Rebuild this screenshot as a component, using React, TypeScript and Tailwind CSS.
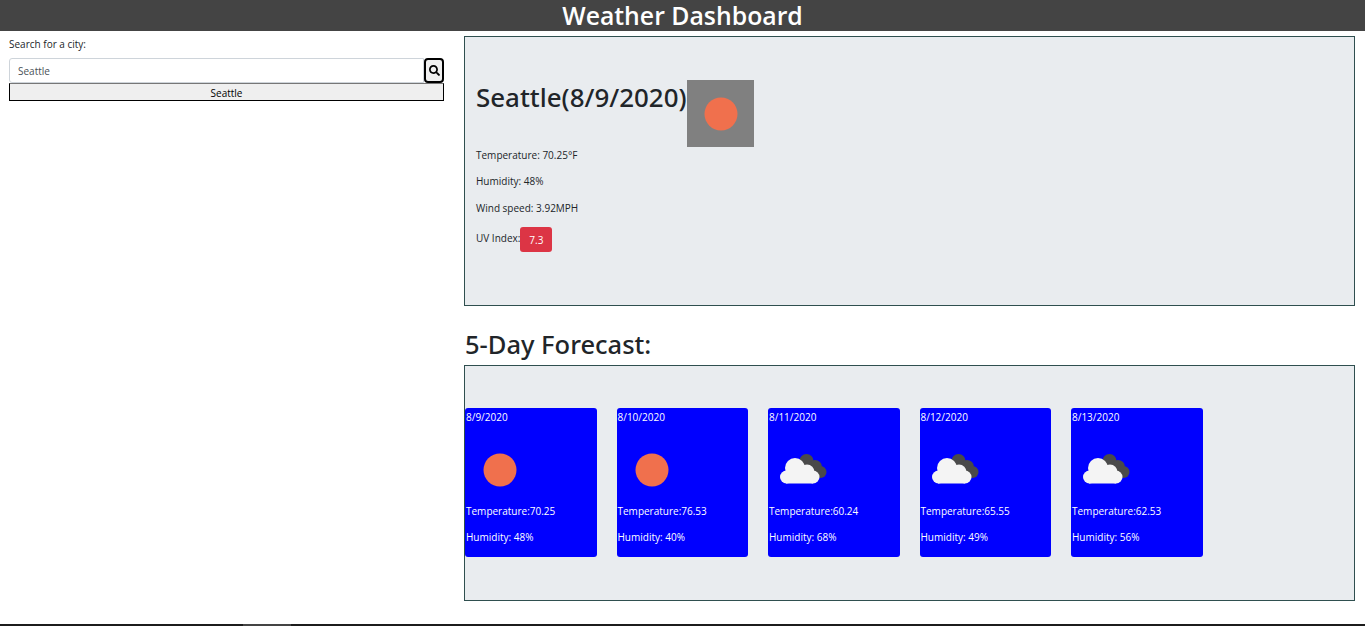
import { FaSearch } from 'react-icons/fa';

const FONT = "font-['Open_Sans','Noto_Sans',sans-serif]";

const forecast = [
    { date: '8/9/2020', temp: '70.25', humidity: '48%', icon: 'sun' },
    { date: '8/10/2020', temp: '76.53', humidity: '40%', icon: 'sun' },
    { date: '8/11/2020', temp: '60.24', humidity: '68%', icon: 'clouds' },
    { date: '8/12/2020', temp: '65.55', humidity: '49%', icon: 'clouds' },
    { date: '8/13/2020', temp: '62.53', humidity: '56%', icon: 'clouds' },
];

const SunIcon = () => (
    <svg width="67" height="67" viewBox="0 0 67 67" className="block">
        <circle cx="34" cy="34" r="16.5" fill="#f0704d" />
    </svg>
);

const CloudsIcon = () => (
    <svg width="67" height="67" viewBox="0 0 67 67" className="block">
        <g fill="#4a4a4a">
            <circle cx="37.5" cy="25" r="7" />
            <circle cx="46" cy="31" r="7" />
            <circle cx="51.5" cy="36" r="6" />
            <rect x="38" y="28" width="14" height="13" />
        </g>
        <g fill="#f4f4f4">
            <circle cx="17.5" cy="41" r="6.5" />
            <circle cx="26" cy="32" r="10" />
            <circle cx="38" cy="36" r="7.5" />
            <circle cx="44" cy="41" r="6.5" />
            <rect x="17" y="35" width="27" height="12.5" />
        </g>
    </svg>
);

export default function App() {
    return (
        <div className={`${FONT} h-[626px] flex flex-col bg-white text-[#212529] overflow-hidden`}>
            {/* Header */}
            <header className="h-[31px] shrink-0 bg-[#444444] flex items-center justify-center">
                <h1 className="text-[24.8px] leading-[31px] font-semibold text-white">Weather Dashboard</h1>
            </header>

            <div className="flex-1 flex gap-[20px] pl-[9px] pr-[10px]">
                {/* Search */}
                <aside className="w-[435px] shrink-0 pt-[5px]">
                    <label className="block text-[10px] leading-[16px]">Search for a city:</label>
                    <div className="flex mt-[6px] h-[25px]">
                        <input
                            readOnly
                            value="Seattle"
                            className="flex-1 min-w-0 h-full px-[8px] text-[10px] text-[#495057] bg-white border border-[#ced4da] rounded-l-[3px] outline-none"
                        />
                        <button className="w-[20px] h-full flex items-center justify-center border-2 border-black rounded-[4px] bg-[#efefef]">
                            <FaSearch size={11} className="text-black" />
                        </button>
                    </div>
                    <button className="w-full h-[18px] flex items-center justify-center pt-[2px] text-[10px] text-black bg-[#efefef] border border-black border-t-[#767676]">
                        Seattle
                    </button>
                </aside>

                {/* Weather */}
                <main className="flex-1 min-w-0 pt-[5px]">
                    <section className="h-[270px] bg-[#e9ecef] border border-[#2f4f4f] pl-[11px] pt-[43px]">
                        <div className="flex items-start">
                            <h2 className="w-[211px] font-['Noto_Sans',sans-serif] text-[25.9px] leading-[34px] font-medium whitespace-nowrap">Seattle(8/9/2020)</h2>
                            <div className="w-[67px] h-[67px] bg-[#808080]">
                                <SunIcon />
                            </div>
                        </div>
                        <div className="text-[10px] leading-[16px]">
                            <p>Temperature: 70.25°F</p>
                            <p className="mt-[10px]">Humidity: 48%</p>
                            <p className="mt-[11px]">Wind speed: 3.92MPH</p>
                            <p className="mt-[11px] flex items-start">
                                <span className="mt-[3px]">UV Index:</span>
                                <span className="w-[32px] h-[25px] flex items-center justify-center bg-[#dc3545] text-white rounded-[3px]">7.3</span>
                            </p>
                        </div>
                    </section>

                    <h2 className="font-['Noto_Sans',sans-serif] text-[25.5px] leading-[32px] font-medium mt-[22px] mb-[5px] pl-[1px]">5-Day Forecast:</h2>

                    <section className="h-[236px] bg-[#e9ecef] border border-[#2f4f4f] pt-[42px]">
                        <div className="flex gap-[20px]">
                            {forecast.map(day => (
                                <div
                                    key={day.date}
                                    className="w-[131.5px] h-[149px] bg-[#0000ff] text-white rounded-[3px] pl-[1px] pt-[1px] text-[10px] leading-[16px]"
                                >
                                    <p>{day.date}</p>
                                    <div className="mt-[11px]">
                                        {day.icon === 'sun' ? <SunIcon /> : <CloudsIcon />}
                                    </div>
                                    <p>Temperature:{day.temp}</p>
                                    <p className="mt-[10px]">Humidity: {day.humidity}</p>
                                </div>
                            ))}
                        </div>
                    </section>
                </main>
            </div>

            {/* Bottom edge */}
            <div className="h-[2px] shrink-0 bg-[#1c1c1c] pl-[243px]">
                <div className="w-[48px] h-full bg-[#444444]" />
            </div>
        </div>
    );
}
